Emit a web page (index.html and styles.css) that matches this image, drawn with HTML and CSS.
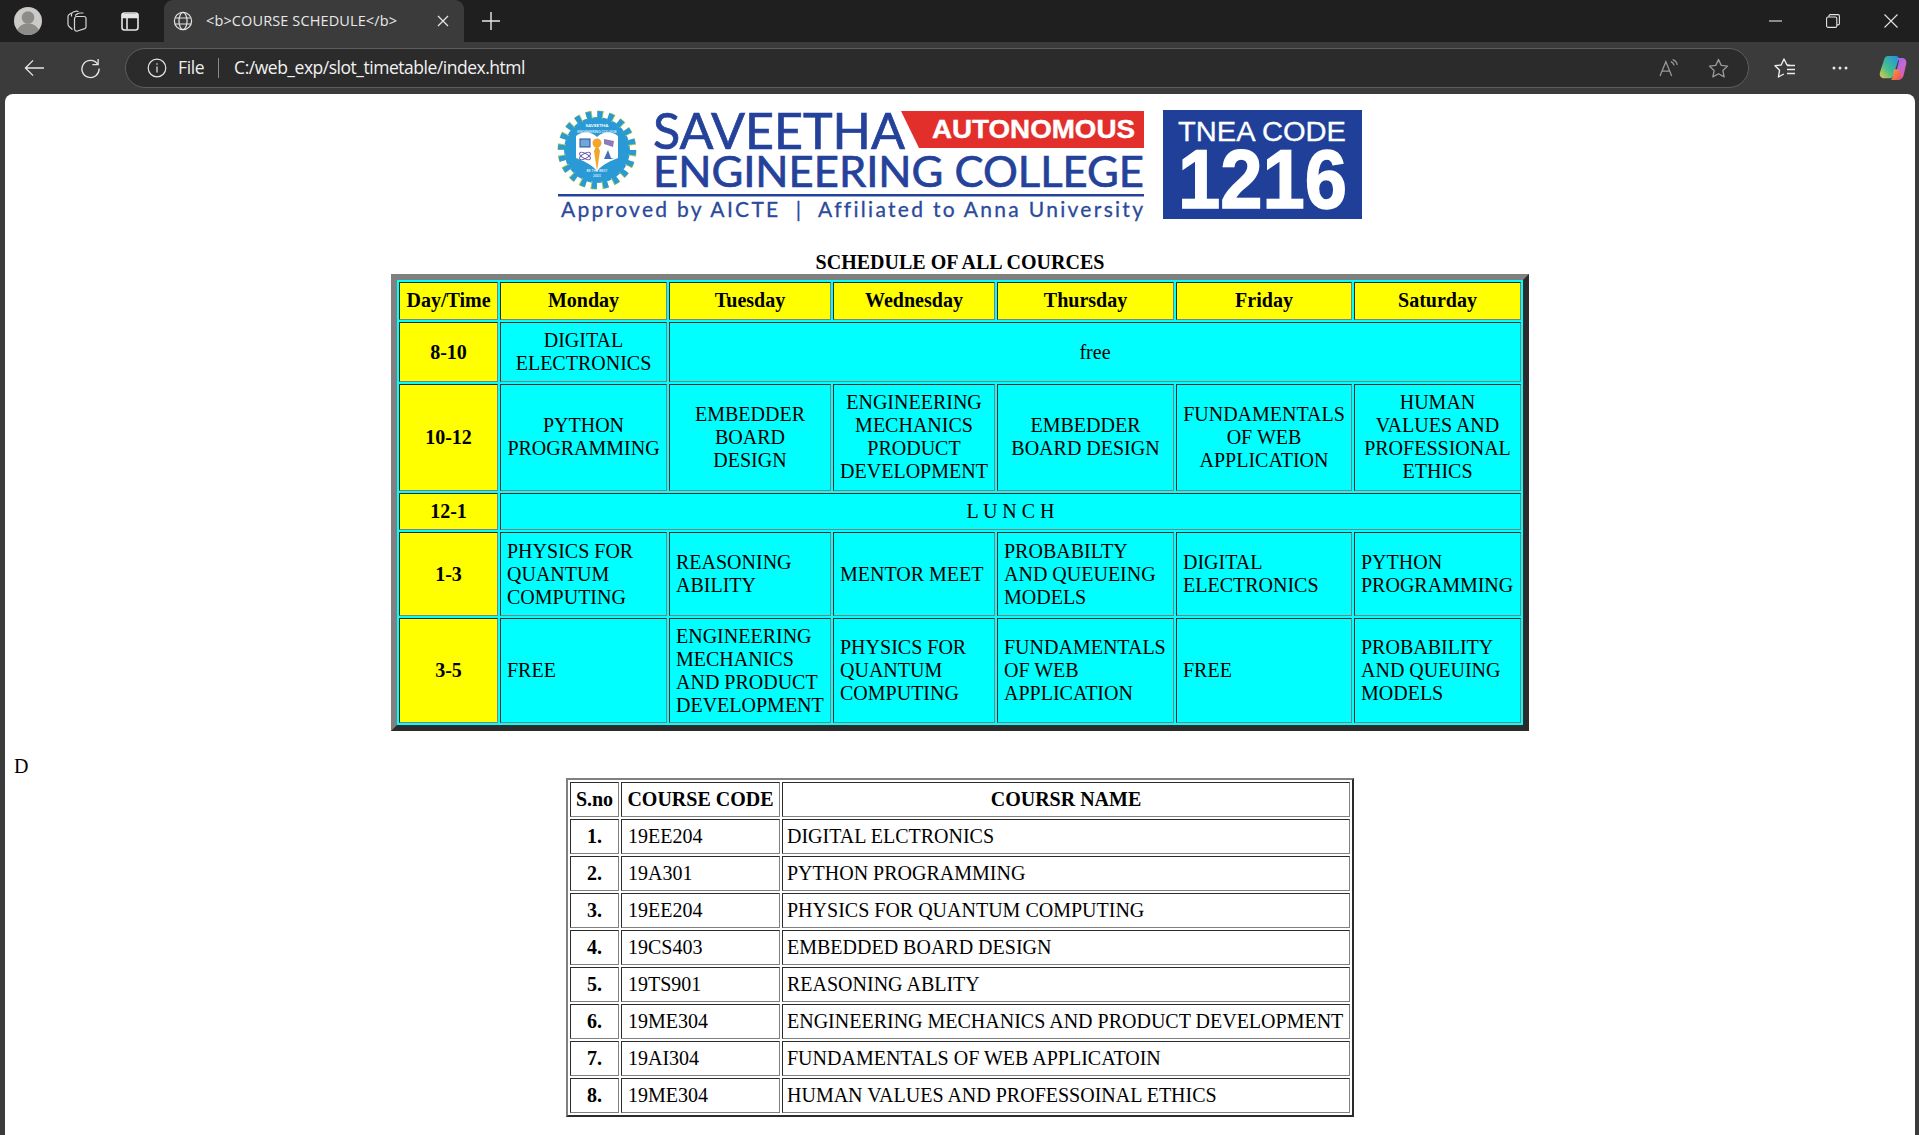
FILE: index.html
```html
<!DOCTYPE html>
<html lang="en">
<head>
<meta charset="utf-8">
<title>COURSE SCHEDULE</title>
<link rel="stylesheet" href="styles.css">
</head>
<body>
<div class="tabbar">
  <svg class="avatar" viewBox="0 0 30 30"><defs><clipPath id="av"><circle cx="15" cy="15" r="14"/></clipPath></defs><circle cx="15" cy="15" r="14" fill="#cbcac6"/><g clip-path="url(#av)" fill="#8e8c88"><circle cx="15" cy="11.5" r="6.3"/><ellipse cx="15" cy="26" rx="11" ry="8.5"/></g></svg>
  <svg class="ic ic-work" viewBox="0 0 24 24" fill="none" stroke="#d6d6d6" stroke-width="1.2" stroke-linejoin="round"><path d="M7.500 20.500L4.800 18.200C3.900 17.400 3 16.500 3 15.200V7.500C3 6.500 3.500 5.800 4.500 5.200L6.500 4"/><path d="M6.500 7.500V5.500C6.500 4 7.500 3.200 8.800 2.800L10.500 2.300C11.300 2 12.500 2 13.500 2.500"/><path d="M10 6.500L12.500 4.800C13.300 4.300 14.200 4 15 4H18.500"/><path d="M9.500 10C9.500 8.800 10.300 7.500 11.500 7.500H19C20.200 7.500 21 8.300 21 9.500V17.800C21 18.700 20.500 19.300 19.800 19.600L12.500 22C11 22.500 9.500 21.500 9.500 20z"/></svg>
  <svg class="ic ic-vtab" viewBox="0 0 24 24" fill="none" stroke="#e6e6e6" stroke-width="1.6"><rect x="4" y="4" width="16" height="17" rx="2.5"/><path d="M4.5 5.5h15v3h-15z" fill="#e6e6e6"/><path d="M9 8v12.5"/></svg>
  <div class="tab">
    <svg class="ic-globe" viewBox="0 0 24 24" fill="none" stroke="#e4e4e4" stroke-width="1.3"><circle cx="12" cy="12" r="9.4"/><ellipse cx="12" cy="12" rx="4.4" ry="9.4"/><path d="M3.2 8.7h17.6M3.2 15.3h17.6"/></svg>
    <span class="tab-title">&lt;b&gt;COURSE SCHEDULE&lt;/b&gt;</span>
    <svg class="ic-close" viewBox="0 0 12 12" stroke="#e4e4e4" stroke-width="1.3"><path d="M1 1l10 10M11 1L1 11"/></svg>
  </div>
  <svg class="ic-plus" viewBox="0 0 18 18" stroke="#e8e8e8" stroke-width="1.4"><path d="M9 0v18M0 9h18"/></svg>
  <div class="winctl">
    <svg class="wc wc-min" viewBox="0 0 14 14" stroke="#e4e4e4" stroke-width="1.1"><path d="M0 7h13"/></svg>
    <svg class="wc wc-max" viewBox="0 0 14 14" fill="none" stroke="#e4e4e4" stroke-width="1.1"><rect x=".6" y="3" width="10.2" height="10.4" rx="1.5"/><path d="M3 3V2c0-.8.6-1.4 1.4-1.4H12c.8 0 1.4.6 1.4 1.4v7.6c0 .8-.6 1.3-1.4 1.3h-1"/></svg>
    <svg class="wc wc-x" viewBox="0 0 14 14" stroke="#e4e4e4" stroke-width="1.1"><path d="M.5.5l13 13M13.500.5l-13 13"/></svg>
  </div>
</div>
<div class="toolbar">
  <svg class="tb-back" viewBox="0 0 22 18" fill="none" stroke="#e6e6e6" stroke-width="1.4"><path d="M21 9H1.500M9.500 1L1.500 9l8 8"/></svg>
  <svg class="tb-reload" viewBox="0 0 22 22" fill="none" stroke="#e6e6e6" stroke-width="1.4"><path d="M18.500 6.500A9 9 0 1 0 20 11"/><path d="M19 1v6h-6"/></svg>
  <div class="addr">
    <svg class="ad-info" viewBox="0 0 20 20" fill="none" stroke="#e6e6e6" stroke-width="1.200"><circle cx="10" cy="10" r="8.800"/><path d="M10 8.500v6M10 5.200v1.500"/></svg>
    <span class="ad-file">File</span>
    <span class="ad-sep"></span>
    <span class="ad-url">C:/web_exp/slot_timetable/index.html</span>
    <svg class="ad-read" viewBox="0 0 22 20" fill="none" stroke="#9a9a9a" stroke-width="1.400"><path d="M1 19L7.500 3 14 19M3.500 13.500h8"/><path d="M13 3c2 .6 3.200 2 3.700 4M15 .8c2.800.8 4.600 3 5.200 5.800"/></svg>
    <svg class="ad-star" viewBox="0 0 22 22" fill="none" stroke="#9a9a9a" stroke-width="1.400" stroke-linejoin="round"><path d="M11 1.500l2.900 6.200 6.600.8-4.900 4.600 1.300 6.700-5.900-3.300-5.900 3.300 1.300-6.700L1.500 8.500l6.600-.8z"/></svg>
  </div>
  <svg class="tb-fav" viewBox="0 0 22 20" fill="none" stroke="#ececec" stroke-width="1.400" stroke-linejoin="round"><path d="M16 7.500L13 7 10 1 7.200 7 1 7.800l4.600 4.400L4.400 19l5.400-3"/><path d="M13 7.500h8M13 11.500h8M13 15.500h8"/></svg>
  <svg class="tb-more" viewBox="0 0 16 4" fill="#e6e6e6"><circle cx="2" cy="2" r="1.500"/><circle cx="8" cy="2" r="1.500"/><circle cx="14" cy="2" r="1.500"/></svg>
  <svg class="tb-cop" viewBox="0 0 28 26">
    <defs>
      <linearGradient id="cp1" x1="0" y1="1" x2="1" y2="0"><stop offset="0" stop-color="#f2c744"/><stop offset=".4" stop-color="#46c08a"/><stop offset="1" stop-color="#1f8fe8"/></linearGradient>
      <linearGradient id="cp2" x1="0" y1="0" x2="1" y2="1"><stop offset="0" stop-color="#7a6be8"/><stop offset=".55" stop-color="#c766d8"/><stop offset="1" stop-color="#f05a7a"/></linearGradient>
      <linearGradient id="cp3" x1="0" y1="0" x2="1" y2="1"><stop offset="0" stop-color="#f7a43a"/><stop offset="1" stop-color="#ea4a5a"/></linearGradient>
    </defs>
    <path d="M9 1h8c1.600 0 2.600 1 3 2.500L14 21c-.6 1.600-2 2.300-3.500 2.300H5c-3 0-5-2.500-4-6L5 5c.6-2.500 2-4 4-4z" fill="url(#cp1)"/>
    <path d="M16 3h7c3 0 5 2.500 4.200 6l-2.500 11c-.6 2.500-2.700 5-5.700 5h-7c2 0 3.300-1.600 4-3.500L20 6c-.4-1.800-2-3-4-3z" fill="url(#cp2)"/>
    <path d="M12 25h6c2 0 3.500-1 4.300-2.800L21 17c-.8-2-2.200-2.800-4-2.800h-2L13.500 22c-.5 1.500-1 2.500-1.500 3z" fill="url(#cp3)"/>
  </svg>
</div>
<div class="viewport">
  <main class="page">
    <div class="logo-wrap">
      <svg class="logo" viewBox="0 0 806 110">
        <g class="seal">
          <circle cx="39" cy="40" r="33" fill="#2a9ad6"/>
          <circle cx="39" cy="40" r="35.500" fill="none" stroke="#b8cf4a" stroke-width="8" stroke-dasharray="6 5.150"/>
          <circle cx="39" cy="40" r="35" fill="none" stroke="#2a9ad6" stroke-width="8" stroke-dasharray="5 6.000"/>
          <path d="M18 26c7-5 14-5 21 1 7-6 14-6 21-1v22c-7 3-14 5-21 13-7-8-14-10-21-13z" fill="#fff"/>
          <rect x="22" y="29" width="10" height="8" fill="#6fa6dc" stroke="#2b4a9b"/>
          <g fill="none" stroke="#5a4aa8" stroke-width=".9"><ellipse cx="27" cy="46" rx="6" ry="2.500" transform="rotate(30 27 46)"/><ellipse cx="27" cy="46" rx="6" ry="2.500" transform="rotate(-30 27 46)"/></g>
          <path d="M46 29l10 2-1 6-9-3z" fill="#8d7ab8"/>
          <path d="M50 40l3 8 3 1h-10z" fill="#3f6fc0"/>
          <path d="M39 34l3 7-3 20-3-20z" fill="#f3a629"/>
          <circle cx="39" cy="33" r="4.500" fill="#f3a629"/>
          <text class="seal-t" x="39" y="17" text-anchor="middle">SAVEETHA</text>
          <text class="seal-s" x="39" y="23" text-anchor="middle">ENGINEERING COLLEGE</text>
          <text class="seal-s" x="39" y="62" text-anchor="middle">BE THE BEST</text>
          <text class="seal-s" x="39" y="67" text-anchor="middle">2001</text>
        </g>
        <text class="lg-name" x="95" y="39" textLength="252" lengthAdjust="spacingAndGlyphs">SAVEETHA</text>
        <path d="M343 1h243v37H361z" fill="#e32f2c"/>
        <text class="lg-auto" x="374" y="28" textLength="203" lengthAdjust="spacingAndGlyphs">AUTONOMOUS</text>
        <text class="lg-eng" x="95" y="77" textLength="491" lengthAdjust="spacingAndGlyphs">ENGINEERING COLLEGE</text>
        <rect x="0" y="84" width="586" height="2.500" fill="#25429b"/>
        <text class="lg-sub" x="3" y="107" textLength="583" lengthAdjust="spacing">Approved by AICTE  |  Affiliated to Anna University</text>
        <rect x="605" y="0" width="199" height="109" fill="#203f98"/>
        <text class="lg-tnea" x="620" y="31" textLength="168" lengthAdjust="spacingAndGlyphs">TNEA CODE</text>
        <text class="lg-num" x="620" y="98" textLength="169" lengthAdjust="spacingAndGlyphs">1216</text>
      </svg>
    </div>

    <table class="sched">
      <caption>SCHEDULE OF ALL COURCES</caption>
      <colgroup>
        <col class="c-day"><col class="c-mon"><col class="c-tue"><col class="c-wed"><col class="c-thu"><col class="c-fri"><col class="c-sat">
      </colgroup>
      <tr class="r-head">
        <th>Day/Time</th><th>Monday</th><th>Tuesday</th><th>Wednesday</th><th>Thursday</th><th>Friday</th><th>Saturday</th>
      </tr>
      <tr class="r-1">
        <th>8-10</th><td class="mid">DIGITAL ELECTRONICS</td><td class="mid" colspan="5">free</td>
      </tr>
      <tr class="r-2">
        <th>10-12</th>
        <td class="mid">PYTHON PROGRAMMING</td>
        <td class="mid">EMBEDDER BOARD DESIGN</td>
        <td class="mid">ENGINEERING MECHANICS PRODUCT DEVELOPMENT</td>
        <td class="mid">EMBEDDER BOARD DESIGN</td>
        <td class="mid">FUNDAMENTALS OF WEB APPLICATION</td>
        <td class="mid">HUMAN VALUES AND PROFESSIONAL ETHICS</td>
      </tr>
      <tr class="r-3">
        <th>12-1</th><td class="mid" colspan="6">L U N C H</td>
      </tr>
      <tr class="r-4">
        <th>1-3</th>
        <td>PHYSICS FOR QUANTUM COMPUTING</td>
        <td>REASONING ABILITY</td>
        <td>MENTOR MEET</td>
        <td>PROBABILTY AND QUEUEING MODELS</td>
        <td>DIGITAL ELECTRONICS</td>
        <td>PYTHON PROGRAMMING</td>
      </tr>
      <tr class="r-5">
        <th>3-5</th>
        <td>FREE</td>
        <td>ENGINEERING MECHANICS AND PRODUCT DEVELOPMENT</td>
        <td>PHYSICS FOR QUANTUM COMPUTING</td>
        <td>FUNDAMENTALS OF WEB APPLICATION</td>
        <td>FREE</td>
        <td>PROBABILITY AND QUEUING MODELS</td>
      </tr>
    </table>

    <p class="stray">D</p>

    <table class="courses">
      <colgroup><col class="k-no"><col class="k-code"><col class="k-name"></colgroup>
      <tr><th>S.no</th><th>COURSE CODE</th><th>COURSR NAME</th></tr>
      <tr><th>1.</th><td>19EE204</td><td class="nm">DIGITAL ELCTRONICS</td></tr>
      <tr><th>2.</th><td>19A301</td><td class="nm">PYTHON PROGRAMMING</td></tr>
      <tr><th>3.</th><td>19EE204</td><td class="nm">PHYSICS FOR QUANTUM COMPUTING</td></tr>
      <tr><th>4.</th><td>19CS403</td><td class="nm">EMBEDDED BOARD DESIGN</td></tr>
      <tr><th>5.</th><td>19TS901</td><td class="nm">REASONING ABLITY</td></tr>
      <tr><th>6.</th><td>19ME304</td><td class="nm">ENGINEERING MECHANICS AND PRODUCT DEVELOPMENT</td></tr>
      <tr><th>7.</th><td>19AI304</td><td class="nm">FUNDAMENTALS OF WEB APPLICATOIN</td></tr>
      <tr><th>8.</th><td>19ME304</td><td class="nm">HUMAN VALUES AND PROFESSOINAL ETHICS</td></tr>
    </table>
  </main>
</div>
</body>
</html>
```

FILE: styles.css
```css
* { box-sizing: border-box; }
html, body { margin: 0; height: 100%; }
body {
  display: flex;
  flex-direction: column;
  height: 1135px;
  overflow: hidden;
  background: #3b3b3b;
  font-family: "Liberation Serif", "Times New Roman", serif;
  font-size: 20px;
  line-height: 23px;
  color: #000;
}
svg { display: block; flex: none; }

/* Tab strip */
.tabbar {
  display: flex;
  align-items: center;
  height: 42px;
  flex: none;
  background: #1f1f1f;
}
.avatar { width: 30px; height: 30px; margin-left: 13px; }
.ic { width: 24px; height: 24px; }
.ic-work { margin-left: 22px; }
.ic-vtab { margin-left: 29px; }
.tab {
  display: flex;
  align-items: center;
  align-self: stretch;
  width: 300px;
  margin-left: 22px;
  padding-left: 8px;
  background: #3b3b3b;
  border-radius: 9px 9px 0 0;
}
.ic-globe { width: 22px; height: 22px; }
.tab-title {
  margin-left: 12px;
  width: 226px;
  font: 14.5px/20px "Open Sans", "Noto Sans", sans-serif;
  letter-spacing: 0.12px;
  color: #e8e8e8;
  white-space: nowrap;
}
.ic-close { width: 12px; height: 12px; margin-left: 5px; }
.ic-plus { width: 18px; height: 18px; margin-left: 18px; }
.winctl { display: flex; align-items: center; margin-left: auto; }
.wc { width: 14px; height: 14px; }
.wc-min { margin-right: 43px; }
.wc-max { margin-right: 44px; }
.wc-x { margin-right: 21px; }

/* Toolbar */
.toolbar {
  display: flex;
  align-items: center;
  height: 52px;
  flex: none;
  background: #3b3b3b;
}
.tb-back { width: 21px; height: 18px; margin-left: 24px; }
.tb-reload { width: 21px; height: 21px; margin-left: 35px; }
.addr {
  display: flex;
  align-items: center;
  width: 1624px;
  height: 40px;
  margin-left: 24px;
  border: 1px solid #5e5e5e;
  border-radius: 20px;
  background: #2b2b2b;
}
.ad-info { width: 20px; height: 20px; margin-left: 21px; }
.ad-file { margin-left: 11px; margin-bottom: 2px; font: 17.500px/24px "Open Sans", "Noto Sans", sans-serif; letter-spacing: -0.4px; color: #ededed; }
.ad-sep { width: 1px; height: 20px; margin-left: 14px; background: #8a8a8a; }
.ad-url { margin-left: 15px; margin-bottom: 2px; font: 17.500px/24px "Open Sans", "Noto Sans", sans-serif; letter-spacing: -0.48px; color: #f2f2f2; white-space: nowrap; }
.ad-read { width: 20px; height: 18px; margin-left: auto; }
.ad-star { width: 21px; height: 21px; margin-left: 29px; margin-right: 19px; }
.tb-fav { width: 22px; height: 20px; margin-left: 25px; }
.tb-more { width: 16px; height: 4px; margin-left: 36px; }
.tb-cop { width: 28px; height: 26px; margin-left: 31px; }

/* Page viewport */
.viewport {
  flex: 1;
  min-height: 0;
  padding: 0 4px 0 5px;
}
.page {
  height: 100%;
  padding: 16px 8px 0;
  background: #fff;
  border-radius: 8px 8px 0 0;
  overflow: hidden;
}
.logo-wrap { display: flex; justify-content: center; padding-left: 2px; }
.logo { width: 806px; height: 110px; overflow: visible; }
.logo text { font-family: "Lato", "Open Sans", sans-serif; }
.logo .lg-name { font-size: 51px; fill: #25429b; stroke: #25429b; stroke-width: .7px; }
.logo .lg-eng { font-size: 43px; fill: #25429b; stroke: #25429b; stroke-width: .7px; }
.logo .lg-auto { font-family: "Liberation Sans", Arial, sans-serif; font-size: 25px; font-weight: 700; fill: #fff; stroke: #fff; stroke-width: .4px; }
.logo .lg-sub { font-size: 21px; fill: #2b4a9b; stroke: #2b4a9b; stroke-width: .3px; letter-spacing: 1px; white-space: pre; }
.logo .lg-tnea { font-family: "Liberation Sans", Arial, sans-serif; font-size: 27px; fill: #fff; stroke: #fff; stroke-width: .3px; }
.logo .lg-num { font-family: "Liberation Sans", Arial, sans-serif; font-size: 83px; font-weight: 700; fill: #fff; stroke: #fff; stroke-width: 1.5px; }
.logo .seal-t { font-size: 4.500px; font-weight: 700; fill: #fff; }
.logo .seal-s { font-size: 3.500px; fill: #fff; }

/* Shared table look */
table {
  margin: 0 auto;
  table-layout: fixed;
  border-style: solid;
  border-color: #808080 #2b2b2b #2b2b2b #808080;
  border-spacing: 2px;
}
td, th {
  border: 1px solid;
  border-color: #2b2b2b #808080 #808080 #2b2b2b;
  padding: 0 6px;
}

/* Schedule table */
.sched {
  width: 1138px;
  margin-top: 31px;
  border-width: 6px;
  background: #0ff;
}
.sched caption { font-weight: 700; }
.sched th { background: #ff0; text-align: center; }
.sched td { background: #0ff; text-align: left; }
.sched td.mid { text-align: center; }
.c-day { width: 99px; }
.c-mon { width: 167px; }
.c-tue { width: 162px; }
.c-wed { width: 162px; }
.c-thu { width: 177px; }
.c-fri { width: 176px; }
.c-sat { width: 167px; }
.r-head th { height: 38px; padding-bottom: 1px; }
.r-1 > * { height: 60px; }
.r-2 > * { height: 107px; padding-bottom: 1px; }
.r-3 > * { height: 37px; }
.r-4 > * { height: 84px; }
.r-5 > * { height: 105px; }

.stray { margin: 24px 0 0; padding-left: 1px; height: 23px; }

/* Course table */
.courses {
  width: 788px;
  border-width: 2px;
}
.courses th, .courses td { height: 35px; padding: 0 4px; white-space: nowrap; }
.courses td { padding-left: 6px; text-align: left; }
.courses td.nm { padding-left: 4px; padding-right: 0; }
.k-no { width: 49px; }
.k-code { width: 159px; }
.k-name { width: 568px; }
```
